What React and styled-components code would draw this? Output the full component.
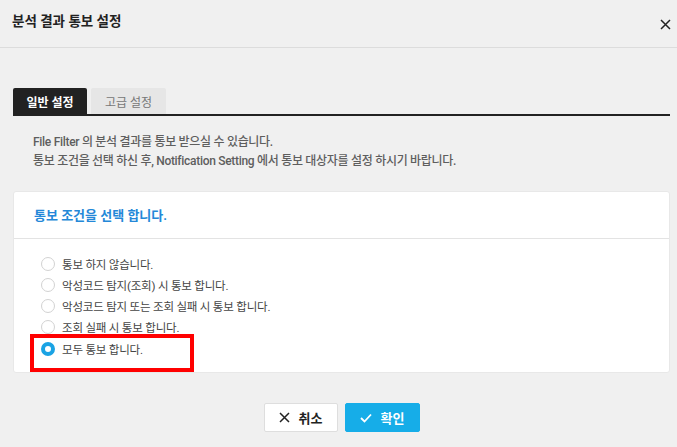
import React, { useState } from "react";
import styled, { createGlobalStyle } from "styled-components";

const Global = createGlobalStyle`
  html, body { margin: 0; padding: 0; background: #f0f0f0; }
  body { font-family: Roboto, "Noto Sans CJK KR", sans-serif; }
  * { box-sizing: border-box; }
`;

const Dialog = styled.div`
  width: 677px;
  height: 447px;
  background: #f0f0f0;
  display: flex;
  flex-direction: column;
`;

const Header = styled.div`
  height: 48px;
  padding: 0 5px 2px 12px;
  border-bottom: 1px solid #dcdcdc;
  display: flex;
  align-items: center;
  justify-content: space-between;
`;

const Title = styled.div`
  font-size: 13.5px;
  font-weight: 700;
  color: #222;
  margin-top: -6px;
`;

const CloseBtn = styled.button`
  border: 0;
  background: none;
  padding: 0;
  width: 14px;
  height: 14px;
  display: flex;
  align-items: center;
  justify-content: center;
  margin-top: 3px;
`;

const Body = styled.div`
  padding: 40px 7px 0 13px;
  display: flex;
  flex-direction: column;
`;

const Tabs = styled.div`
  display: flex;
  gap: 4px;
  align-items: flex-end;
  border-bottom: 2px solid #222;
`;

const Tab = styled.div`
  width: ${(p) => (p.$active ? 74 : 75)}px;
  height: 26px;
  display: flex;
  align-items: center;
  justify-content: center;
  font-size: 12px;
  font-weight: ${(p) => (p.$active ? 700 : 400)};
  color: ${(p) => (p.$active ? "#fff" : "#777")};
  background: ${(p) => (p.$active ? "#222" : "#e6e6e6")};
  border-radius: 2px 2px 0 0;
`;

const Desc = styled.div`
  padding: 17px 0 0 20px;
  font-size: 12px;
  font-weight: 500;
  letter-spacing: -0.3px;
  line-height: 19px;
  color: #5e5e5e;
`;

const Card = styled.div`
  margin-top: 20px;
  background: #fff;
  border-radius: 3px;
  border: 1px solid #e8e8e8;
  display: flex;
  flex-direction: column;
`;

const CardHeader = styled.div`
  height: 47px;
  padding: 0 0 2px 20px;
  display: flex;
  align-items: center;
  border-bottom: 1px solid #e3e3e3;
  font-size: 13px;
  font-weight: 700;
  color: #2488d8;
`;

const OptionList = styled.div`
  position: relative;
  padding: 14px 0 13px 27px;
  display: flex;
  flex-direction: column;
`;

const Option = styled.label`
  display: flex;
  align-items: center;
  gap: 7px;
  height: 21px;
  margin-top: ${(p) => (p.$gap ? 1 : 0)}px;
  font-size: 11.5px;
  letter-spacing: -0.2px;
  color: #444;
  cursor: pointer;
`;

const Radio = styled.span`
  width: 14px;
  height: 14px;
  border-radius: 50%;
  background: #fff;
  border: ${(p) => (p.$checked ? "4px solid #1aa3e4" : "1px solid #d2d2d2")};
  flex: none;
`;

const Highlight = styled.div`
  position: absolute;
  left: 16px;
  top: 95px;
  width: 164px;
  height: 38px;
  border: 4px solid #ff0000;
  pointer-events: none;
`;

const Footer = styled.div`
  margin-top: 30px;
  display: flex;
  justify-content: center;
  gap: 7px;
`;

const Button = styled.button`
  width: ${(p) => (p.$primary ? 75 : 74)}px;
  height: 29px;
  border-radius: 2px;
  border: 1px solid ${(p) => (p.$primary ? "#16ade8" : "#dedede")};
  background: ${(p) => (p.$primary ? "#16ade8" : "#fff")};
  color: ${(p) => (p.$primary ? "#fff" : "#222")};
  font-family: Roboto, "Noto Sans CJK KR", sans-serif;
  font-size: 13px;
  font-weight: 700;
  display: flex;
  align-items: center;
  justify-content: center;
  gap: 9px;
  padding: 0;
`;

const options = [
  "통보 하지 않습니다.",
  "악성코드 탐지(조회) 시 통보 합니다.",
  "악성코드 탐지 또는 조회 실패 시 통보 합니다.",
  "조회 실패 시 통보 합니다.",
  "모두 통보 합니다.",
];

export default function App() {
  const [sel, setSel] = useState(4);
  return (
    <>
      <Global />
      <Dialog>
        <Header>
          <Title>분석 결과 통보 설정</Title>
          <CloseBtn aria-label="close">
            <svg width="11" height="11" viewBox="0 0 11 11">
              <path d="M1 1L10 10M10 1L1 10" stroke="#222" strokeWidth="1.5" />
            </svg>
          </CloseBtn>
        </Header>
        <Body>
          <Tabs>
            <Tab $active>일반 설정</Tab>
            <Tab>고급 설정</Tab>
          </Tabs>
          <Desc>
            File Filter 의 분석 결과를 통보 받으실 수 있습니다.
            <br />
            통보 조건을 선택 하신 후, Notification Setting 에서 통보 대상자를 설정 하시기 바랍니다.
          </Desc>
          <Card>
            <CardHeader>통보 조건을 선택 합니다.</CardHeader>
            <OptionList>
              {options.map((o, i) => (
                <Option key={i} $gap={i === 4} onClick={() => setSel(i)}>
                  <Radio $checked={sel === i} />
                  {o}
                </Option>
              ))}
              <Highlight />
            </OptionList>
          </Card>
          <Footer>
            <Button>
              <svg width="11" height="11" viewBox="0 0 11 11">
                <path d="M1 1L10 10M10 1L1 10" stroke="#222" strokeWidth="1.5" />
              </svg>
              취소
            </Button>
            <Button $primary>
              <svg width="12" height="10" viewBox="0 0 12 10">
                <path d="M1 5L4.5 8.5L11 1.5" stroke="#fff" strokeWidth="1.8" fill="none" />
              </svg>
              확인
            </Button>
          </Footer>
        </Body>
      </Dialog>
    </>
  );
}
